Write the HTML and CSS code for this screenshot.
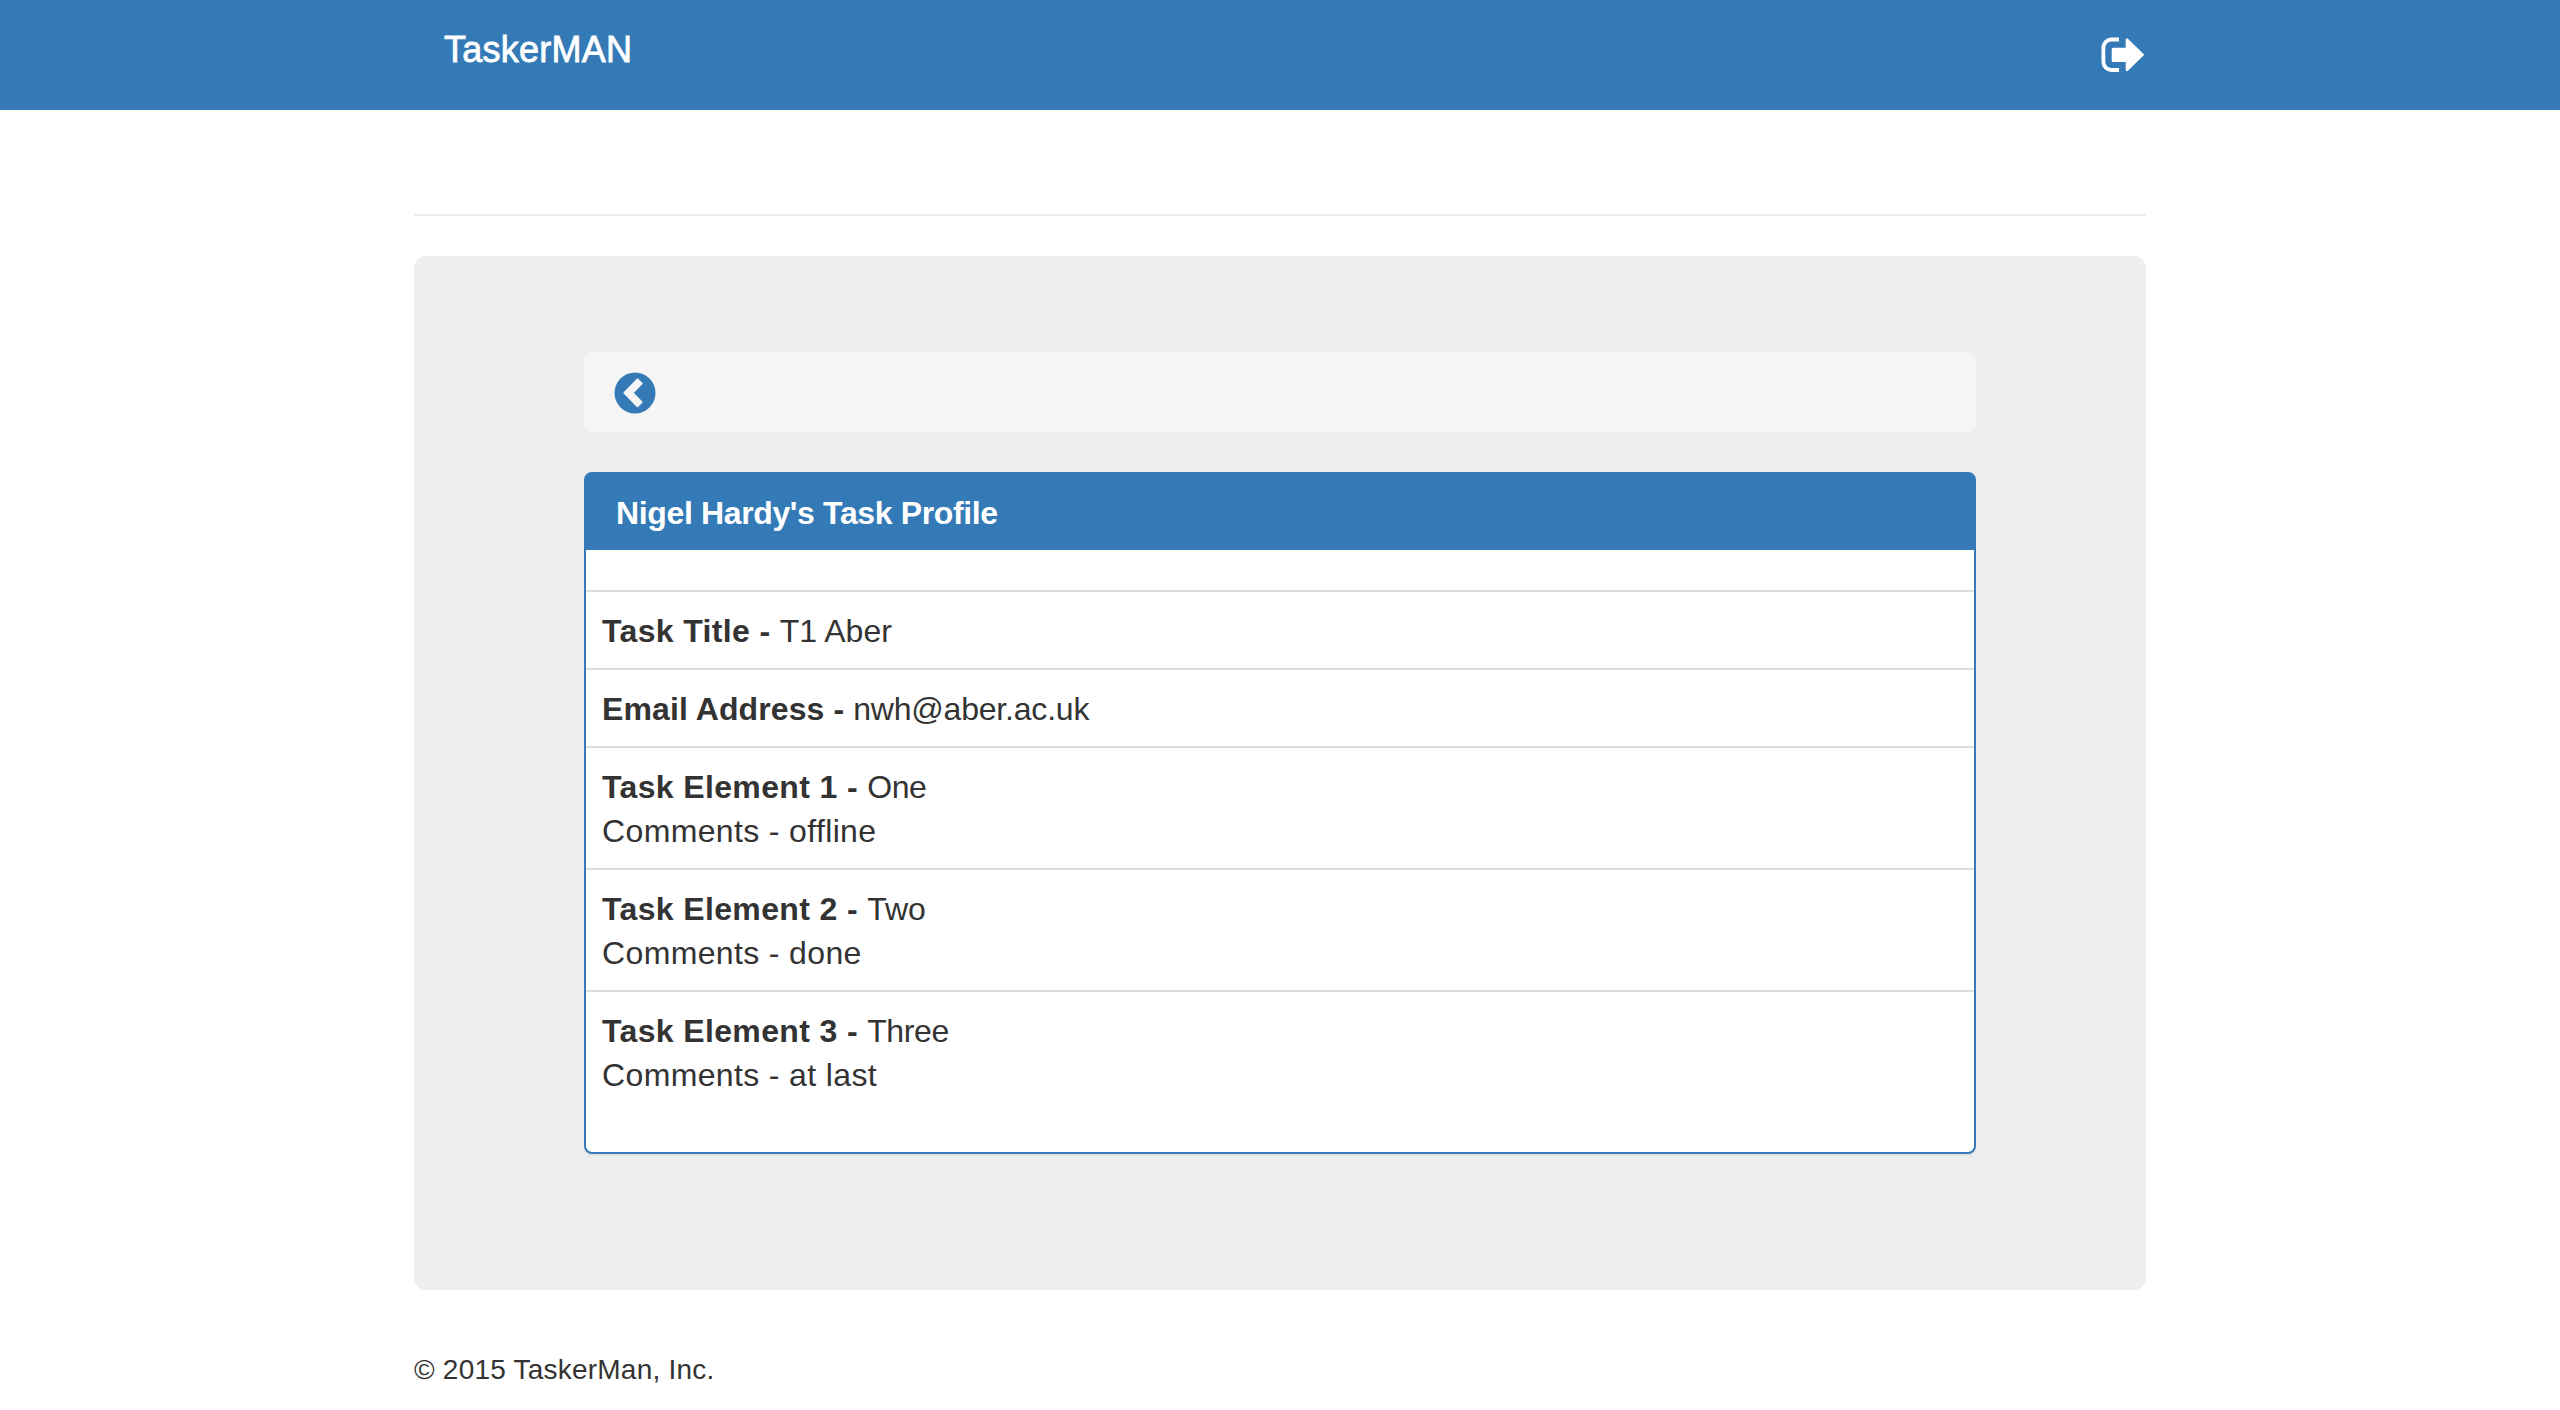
FILE: index.html
```html
<!DOCTYPE html>
<html lang="en">
<head>
<meta charset="utf-8">
<title>TaskerMAN</title>
<link rel="stylesheet" href="styles.css">
</head>
<body>
<nav class="navbar">
  <div class="container navbar-inner">
    <a class="brand">TaskerMAN</a>
    <svg class="logout" viewBox="0 0 44 36" aria-label="Log out">
      <path d="M19 3.5H11.5A8 8 0 0 0 3.4 11.500V26A8 8 0 0 0 11.500 34H19" fill="none" stroke="#fff" stroke-width="3.8"/>
      <path d="M13.200 11.700H25.700V4Q25.700 1 28.200 3L43.300 17.700Q44.500 18.700 43.300 19.700L28.200 34.400Q25.700 36.400 25.700 33.400V26H13.200Q11.700 26 11.700 24.500V13.200Q11.700 11.700 13.200 11.700Z" fill="#fff"/>
    </svg>
  </div>
</nav>
<main class="container">
  <hr class="rule">
  <section class="jumbotron">
    <div class="breadcrumb">
      <svg class="back" viewBox="0 0 42 42" aria-label="Back">
        <circle cx="21" cy="21" r="20.500" fill="#337ab7"/>
        <path d="M10.300 20.900L23.500 7.300L27.700 11.500L18.600 20.900L27.700 30.200L23.500 34.400Z" fill="#f5f5f5" stroke="#f5f5f5" stroke-width="1.800" stroke-linejoin="round"/>
      </svg>
    </div>
    <article class="panel">
      <h3 class="panel-heading">Nigel Hardy's Task Profile</h3>
      <div class="tasks">
        <div class="row"><b class="label">Task Title - </b><span>T1 Aber</span></div>
        <div class="row"><b class="label-email">Email Address - </b><span class="value-email">nwh@aber.ac.uk</span></div>
        <div class="row"><b class="label">Task Element 1 - </b><span class="value">One</span><br><span class="comment">Comments - offline</span></div>
        <div class="row"><b class="label">Task Element 2 - </b><span>Two</span><br><span class="comment">Comments - done</span></div>
        <div class="row"><b class="label">Task Element 3 - </b><span class="value">Three</span><br><span class="comment">Comments - at last</span></div>
      </div>
    </article>
  </section>
  <footer class="footer">© 2015 TaskerMan, Inc.</footer>
</main>
</body>
</html>
```
FILE: styles.css
```css
* { box-sizing: border-box; }
body {
  margin: 0;
  background: #fff;
  color: #333;
  font-family: "Liberation Sans", Arial, sans-serif;
  font-size: 32px;
  line-height: 44px;
  overflow: hidden;
}
.container { width: 1732px; margin: 0 auto; }
.navbar { height: 110px; background: #337ab7; }
.navbar-inner {
  display: flex;
  justify-content: space-between;
  align-items: flex-start;
  padding: 30px 2px 0 30px;
}
.brand { color: #fff; font-size: 36px; line-height: 40px; letter-spacing: 0.25px; -webkit-text-stroke: 0.8px #fff; }
.logout { width: 44px; height: 36px; margin-top: 6px; }
.rule { height: 2px; margin: 104px 0 40px; border: 0; background: #eee; }
.jumbotron {
  height: 1034px;
  padding: 96px 170px;
  border-radius: 12px;
  background: #eee;
}
.breadcrumb {
  display: flex;
  align-items: center;
  height: 80px;
  margin-bottom: 40px;
  padding: 2px 29.5px 0;
  border-radius: 8px;
  background: #f5f5f5;
}
.back { width: 42px; height: 42px; }
.panel {
  border: 2px solid #337ab7;
  border-radius: 8px;
  background: #fff;
  box-shadow: 0 2px 2px rgba(0, 0, 0, .05);
}
.panel-heading {
  height: 76px;
  margin: 0;
  padding: 20px 30px;
  background: #337ab7;
  color: #fff;
  font-size: 32px;
  line-height: 38px;
  letter-spacing: -0.36px;
}
.tasks { padding: 40px 0; }
.row { padding: 17px 16px 15px; border-top: 2px solid #ddd; }
.label { letter-spacing: 0.36px; }
.label-email { letter-spacing: 0.1px; }
.value { letter-spacing: -0.4px; }
.value-email { letter-spacing: -0.2px; }
.comment { letter-spacing: 0.36px; }
.footer { margin-top: 58px; font-size: 28px; line-height: 44px; letter-spacing: 0.22px; }
```
